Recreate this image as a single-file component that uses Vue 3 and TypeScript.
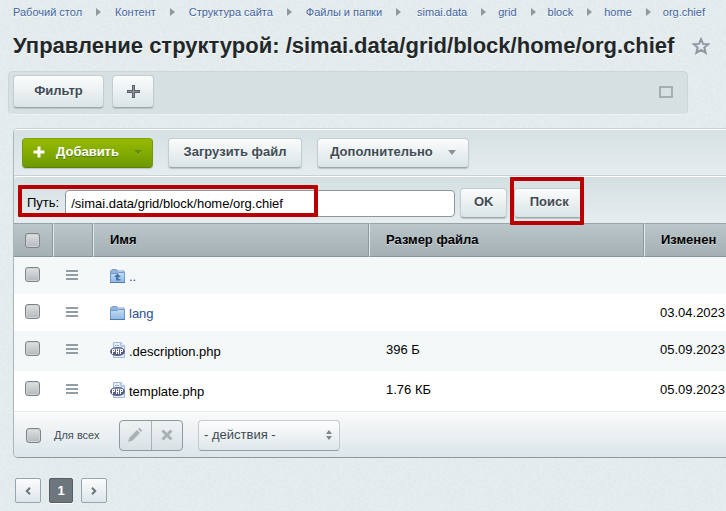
<script setup lang="ts">
import { ref } from 'vue'

interface Crumb {
  text: string
  gap?: 'wide' | 'tight'
}

interface Entry {
  name: string
  kind: 'up' | 'folder' | 'php'
  size: string
  modified: string
}

const crumbs: Crumb[] = [
  { text: 'Рабочий стол' },
  { text: 'Контент' },
  { text: 'Структура сайта' },
  { text: 'Файлы и папки' },
  { text: 'simai.data', gap: 'wide' },
  { text: 'grid', gap: 'tight' },
  { text: 'block', gap: 'tight' },
  { text: 'home', gap: 'tight' },
  { text: 'org.chief', gap: 'tight' },
]

const entries: Entry[] = [
  { name: '..', kind: 'up', size: '', modified: '' },
  { name: 'lang', kind: 'folder', size: '', modified: '03.04.2023' },
  { name: '.description.php', kind: 'php', size: '396 Б', modified: '05.09.2023' },
  { name: 'template.php', kind: 'php', size: '1.76 КБ', modified: '05.09.2023' },
]

const path = ref('/simai.data/grid/block/home/org.chief')
const action = ref('')
const selected = ref<string[]>([])
</script>

<template>
  <div class="page">
    <nav class="crumbs">
      <template v-for="(crumb, i) in crumbs" :key="crumb.text">
        <svg v-if="i > 0" class="crumb-arrow" :class="crumb.gap" viewBox="0 0 5 8"><path d="M0 0L5 4L0 8Z" fill="#8f989c" /></svg>
        <a href="#">{{ crumb.text }}</a>
      </template>
    </nav>

    <header class="title">
      <h1>Управление структурой: /simai.data/grid/block/home/org.chief</h1>
      <button class="bare" type="button" aria-label="Избранное">
        <svg class="star" viewBox="0 0 18 18">
          <path d="M9 2.2L11 6.9L16.3 7.2L12.3 10.6L13.6 15.8L9 13L4.4 15.8L5.7 10.6L1.7 7.2L7 6.9Z" fill="none" stroke="#8d98a3" stroke-width="2" />
        </svg>
      </button>
    </header>

    <section class="filter">
      <button class="btn tall filter-btn" type="button">Фильтр</button>
      <button class="btn tall plus-btn" type="button" aria-label="Добавить фильтр">
        <svg class="plus" viewBox="0 0 13 13"><path d="M5 0h3V5h5v3H8v5H5V8H0V5H5Z" fill="#596268" /><path d="M6 1h1V6h5v1H7v5H6V7H1V6H6Z" fill="#8b9499" /></svg>
      </button>
      <button class="bare fold" type="button" aria-label="Свернуть">
        <svg class="window" viewBox="0 0 14 12"><path d="M1 1H13V11H1Z" fill="none" stroke="#a5afb3" stroke-width="2" /></svg>
      </button>
    </section>

    <section class="panel">
      <div class="toolbar">
        <button class="btn add" type="button">
          <svg class="add-plus" viewBox="0 0 12 12"><path d="M4.500 .5h3v4h4v3h-4v4h-3v-4h-4v-3h4Z" fill="#fff" /></svg>
          <span>Добавить</span>
          <svg class="caret" viewBox="0 0 8 5"><path d="M0 0H8L4 5Z" fill="#638f0c" /><path d="M1 1.500L4 5L7 1.500" fill="none" stroke="#a4c545" stroke-width=".6" /></svg>
        </button>
        <button class="btn upload" type="button">Загрузить файл</button>
        <button class="btn more" type="button">
          <span>Дополнительно</span>
          <svg class="caret" viewBox="0 0 8 5"><path d="M0 0H8L4 5Z" fill="#8b9397" /></svg>
        </button>
      </div>

      <form class="search" @submit.prevent>
        <label for="path">Путь:</label>
        <input id="path" v-model="path" class="path" type="text">
        <button class="btn ok" type="submit">OK</button>
        <div class="find-wrap">
          <button class="btn find" type="button">Поиск</button>
          <span class="mark mark-find"></span>
        </div>
        <span class="mark mark-path"></span>
      </form>

      <table>
        <colgroup>
          <col class="c-check"><col class="c-menu"><col class="c-name"><col class="c-size"><col>
        </colgroup>
        <thead>
          <tr>
            <th><input type="checkbox" aria-label="Выбрать все"></th>
            <th></th>
            <th>Имя</th>
            <th>Размер файла</th>
            <th>Изменен</th>
          </tr>
        </thead>
        <tbody>
          <tr v-for="e in entries" :key="e.name" :class="{ file: e.kind === 'php' }">
            <td><input v-model="selected" type="checkbox" :value="e.name" :aria-label="e.name"></td>
            <td>
              <button class="bare" type="button" aria-label="Меню">
                <svg class="menu" viewBox="0 0 12 10"><path d="M0 0H12V2H0ZM0 4H12V6H0ZM0 8H12V10H0Z" fill="#929da5" /></svg>
              </button>
            </td>
            <td>
              <a class="entry" href="#">
                <svg v-if="e.kind !== 'php'" class="icon" viewBox="0 0 16 16">
                  <defs>
                    <linearGradient id="folder" x2="0" y2="1"><stop stop-color="#c3ddf3" /><stop offset="1" stop-color="#8db9e2" /></linearGradient>
                  </defs>
                  <path d="M.5 14.500V3L2 1.500H6.500L8 3H14V5H14.500V14.500Z" fill="#8fb4de" stroke="#7f9fca" />
                  <path d="M8 3.500H13V5H8Z" fill="#e6f1fb" />
                  <path d="M.5 5.500H7L8.500 4.500H14.500V14.500H.5Z" fill="url(#folder)" stroke="#7397c8" />
                  <path d="M0 14.500H15" stroke="#5379b1" />
                  <path v-if="e.kind === 'up'" d="M7.500 5.500L11 9H8.500V11H10.500V12.500H6V9H4Z" fill="#4a72ae" />
                </svg>
                <svg v-else class="icon" viewBox="0 0 16 16">
                  <path d="M3.500 .5H11L14.500 4V15.500H3.500Z" fill="#e4eefb" stroke="#a3b8dd" />
                  <path d="M11 .5V4H14.500" fill="#fff" stroke="#88a1cf" />
                  <path d="M5 3.500H9M5 5.500H12" stroke="#9db5dd" />
                  <ellipse cx="7.500" cy="9.500" rx="7.500" ry="4.500" fill="#565d8b" />
                  <path d="M1.500 8C4 5 11 5 13.500 8Z" fill="#8b91b6" />
                  <path d="M2.500 12V7.500H4.500V9.500H2.500M6.500 7V12M6.500 9.500H8.500M8.500 7V12M10.500 12V7.500H12.500V9.500H10.500" fill="none" stroke="#fff" />
                </svg>
                <span>{{ e.name }}</span>
              </a>
            </td>
            <td>{{ e.size }}</td>
            <td>{{ e.modified }}</td>
          </tr>
        </tbody>
      </table>

      <footer class="actions">
        <label class="all"><input type="checkbox"><span>Для всех</span></label>
        <div class="group">
          <button type="button" aria-label="Изменить" disabled>
            <svg class="pencil" viewBox="0 0 16 16"><path d="M1 15L2.500 10.500L10 3L13 6L5.500 13.500ZM11 2L12.500 .8L15.200 3.500L14 5Z" fill="#a9b1b5" /></svg>
          </button>
          <button type="button" aria-label="Удалить" disabled>
            <svg class="cross" viewBox="0 0 12 12"><path d="M1.500 1.500L10.500 10.500M10.500 1.500L1.500 10.500" stroke="#a9b1b5" stroke-width="3" /></svg>
          </button>
        </div>
        <div class="select">
          <select v-model="action" aria-label="Действия">
            <option value="">- действия -</option>
          </select>
          <svg class="updown" viewBox="0 0 6 10"><path d="M0 4L3 0L6 4ZM0 6H6L3 10Z" fill="#7b868c" /></svg>
        </div>
      </footer>
    </section>

    <nav class="pager">
      <button type="button" aria-label="Назад"><svg class="chev" viewBox="0 0 6 8"><path d="M5 .8L1.800 4L5 7.200" fill="none" stroke="#6b767c" stroke-width="2" /></svg></button>
      <span class="current">1</span>
      <button type="button" aria-label="Вперёд"><svg class="chev" viewBox="0 0 6 8"><path d="M1 .8L4.200 4L1 7.200" fill="none" stroke="#6b767c" stroke-width="2" /></svg></button>
    </nav>
  </div>
</template>

<style>
body {
  background: #e1e9eb url("data:image/svg+xml,%3Csvg xmlns='http://www.w3.org/2000/svg' width='100' height='100'%3E%3Cfilter id='n'%3E%3CfeTurbulence type='fractalNoise' baseFrequency='.35' numOctaves='2' stitchTiles='stitch'/%3E%3CfeColorMatrix values='0 0 0 0 1 0 0 0 0 1 0 0 0 0 1 .5 0 0 0 -.15'/%3E%3C/filter%3E%3Crect width='100' height='100' filter='url(%23n)'/%3E%3C/svg%3E");
}
</style>

<style scoped>
.page {
  font-family: "Liberation Sans", Arial, sans-serif;
  font-size: 13px;
  line-height: 16px;
  color: #000;
  overflow: hidden;
}
.page * {
  box-sizing: border-box;
}
svg {
  display: block;
  flex: none;
}
button, input, select {
  font: inherit;
  margin: 0;
}
.bare {
  display: block;
  padding: 0;
  border: 0;
  background: none;
}
.crumbs {
  display: flex;
  align-items: center;
  padding: 4px 0 0 13px;
  font-size: 11px;
  white-space: nowrap;
}
.crumbs a {
  color: #3f64a0;
  text-decoration: none;
  text-shadow: 0 1px #fff;
}
.crumb-arrow {
  width: 5px;
  height: 8px;
  margin: 0 14px;
}
.crumb-arrow.wide {
  margin-right: 16px;
}
.crumb-arrow.tight {
  margin-right: 12px;
}
.title {
  display: flex;
  align-items: center;
  gap: 18px;
  padding: 12px 0 0 13px;
}
h1 {
  margin: 0;
  font-size: 22px;
  line-height: 28px;
  color: #222729;
  white-space: nowrap;
  text-shadow: 0 1px #fff;
}
.star {
  width: 18px;
  height: 18px;
}
.filter {
  display: flex;
  align-items: center;
  gap: 8px;
  height: 44px;
  margin: 11px 38px 0 8px;
  padding: 0 14px 3px 4px;
  border: 1px solid #cdd5d7;
  border-bottom-color: #edf2f3;
  border-radius: 5px;
  background: rgba(210, 219, 221, .7);
}
.fold {
  margin-left: auto;
}
.window {
  width: 14px;
  height: 12px;
}
.plus {
  width: 13px;
  height: 13px;
}
.btn {
  display: flex;
  align-items: center;
  justify-content: center;
  height: 30px;
  padding: 0 0 2px;
  border: 1px solid #c4ccd0;
  border-bottom-color: #9da7aa;
  border-radius: 4px;
  background: linear-gradient(#fbfcfc, #dae4e7);
  box-shadow: 0 1px 1px #b8c2c5;
  color: #3f4b54;
  font-weight: bold;
  white-space: nowrap;
  text-shadow: 0 1px #fff;
}
.tall {
  height: 33px;
}
.filter-btn {
  width: 91px;
}
.plus-btn {
  width: 42px;
  padding-bottom: 0;
}
.panel {
  margin: 13px 0 0 13px;
  border: 1px solid #aab5b9;
  border-right: 0;
  border-top-color: #c9d2d4;
  border-bottom-color: #8e999c;
  border-radius: 5px 0 0 5px;
}
.toolbar {
  display: flex;
  gap: 15px;
  height: 47px;
  padding: 8px;
  border-top: 1px solid #fff;
  border-bottom: 1px solid #c9d2d4;
  border-radius: 4px 0 0 0;
  background: linear-gradient(#d6e0e2, #e5ecee);
}
.add {
  gap: 11px;
  width: 131px;
  border-color: #80a509 #75980a #5c7f06;
  background: linear-gradient(#97ba00, #6d9a02);
  color: #fff;
  text-shadow: 0 1px #57790a;
}
.add .caret {
  margin-left: 4px;
}
.add-plus {
  width: 12px;
  height: 12px;
}
.caret {
  width: 8px;
  height: 5px;
}
.upload {
  width: 134px;
}
.more {
  gap: 15px;
  width: 152px;
}
.search {
  position: relative;
  display: flex;
  align-items: center;
  height: 47px;
  padding: 6px 0 0 13px;
  border-top: 1px solid #fff;
  border-radius: 4px 0 0 0;
  background: linear-gradient(#d4dfe1, #e7edef);
}
.path {
  width: 390px;
  height: 27px;
  margin: 0 5px 0 6px;
  padding: 0 5px;
  border: 1px solid #8b989f;
  border-radius: 4px;
  background: #fff;
}
.ok {
  width: 47px;
}
.find-wrap {
  position: relative;
  margin-left: 7px;
}
.find {
  width: 70px;
}
.mark {
  position: absolute;
  border: 4px solid #b90000;
  border-radius: 1px;
  pointer-events: none;
}
.mark-find {
  inset: -11px 0 -7px -4px;
}
.mark-path {
  left: 4px;
  top: 8px;
  width: 300px;
  height: 32px;
}
table {
  width: 100%;
  table-layout: fixed;
  border-collapse: separate;
  border-spacing: 0;
}
.c-check {
  width: 39px;
}
.c-menu {
  width: 40px;
}
.c-name {
  width: 276px;
}
.c-size {
  width: 275px;
}
th {
  height: 34px;
  padding: 0 0 0 16px;
  border-top: 1px solid #97a3a8;
  border-bottom: 1px solid #87949a;
  border-right: 1px solid #8b979b;
  border-left: 1px solid #e3eaec;
  background: linear-gradient(#b9c6ca, #a5b0b3);
  text-align: left;
  text-shadow: 0 1px #d3dcdf;
  white-space: nowrap;
}
th:first-child {
  padding-left: 11px;
  border-left: 0;
}
th:last-child {
  border-right: 0;
}
td {
  height: 37px;
  padding: 11px 0 0 17px;
  background: #fff;
  vertical-align: top;
  white-space: nowrap;
}
tr:nth-child(odd) td {
  background: #f4f8f9;
}
.file td {
  height: 40px;
}
td:nth-child(1) {
  padding: 10px 0 0 11px;
}
td:nth-child(2) {
  padding: 13px 0 0 13px;
}
td:last-child {
  padding-left: 16px;
}
input[type="checkbox"] {
  display: block;
  appearance: none;
  width: 15px;
  height: 15px;
  border: 1px solid #7c8488;
  border-radius: 3px;
  background: linear-gradient(#dfe1e2, #b5b9bc);
  box-shadow: inset 0 0 0 1px #cfd3d5;
}
.menu {
  width: 12px;
  height: 10px;
}
.entry {
  display: flex;
  gap: 3px;
  color: #1f4f94;
  text-decoration: none;
}
.file .entry {
  color: #000;
}
.entry span {
  padding-top: 1px;
}
.file .entry span {
  padding-top: 2px;
}
.icon {
  width: 16px;
  height: 16px;
}
.actions {
  display: flex;
  align-items: center;
  height: 46px;
  padding: 1px 0 0 12px;
  border-top: 1px solid #e6eaeb;
  border-radius: 0 0 0 4px;
  background: linear-gradient(#fafbfb, #dce5ea);
}
.all {
  display: flex;
  align-items: center;
  gap: 13px;
  width: 93px;
  font-size: 11px;
  color: #3f4b54;
  white-space: nowrap;
}
.group {
  display: flex;
  width: 64px;
  height: 31px;
  border: 1px solid #8d999e;
  border-radius: 4px;
  background: linear-gradient(#eef2f3, #d9e0e4);
}
.group button {
  display: flex;
  flex: 1;
  align-items: center;
  justify-content: center;
  padding: 0;
  border: 0;
  background: none;
}
.group button + button {
  border-left: 1px solid #a7b1b6;
}
.pencil {
  width: 16px;
  height: 16px;
}
.cross {
  width: 12px;
  height: 12px;
}
.select {
  display: grid;
  align-items: center;
  margin-left: 15px;
}
.select > * {
  grid-area: 1 / 1;
}
select {
  appearance: none;
  width: 142px;
  height: 31px;
  padding: 0 5px;
  border: 1px solid #c3cbcf;
  border-bottom-color: #929da1;
  border-radius: 4px;
  background: linear-gradient(#fdfdfd, #dfe7ea);
  color: #3f4b54;
}
.updown {
  width: 6px;
  height: 10px;
  margin-right: 8px;
  justify-self: end;
  pointer-events: none;
}
.pager {
  display: flex;
  gap: 8px;
  padding: 20px 0 8px 15px;
}
.pager button, .current {
  display: flex;
  align-items: center;
  justify-content: center;
  width: 26px;
  height: 25px;
  padding: 0;
  border: 1px solid #94a5af;
  border-radius: 2px;
  background: linear-gradient(#fbfcfc, #dde6ea);
}
.current {
  width: 24px;
  border-color: #565e64;
  background: #6e767d;
  color: #fff;
  font-weight: bold;
  box-shadow: 0 1px #fff;
}
.chev {
  width: 6px;
  height: 8px;
}
</style>
